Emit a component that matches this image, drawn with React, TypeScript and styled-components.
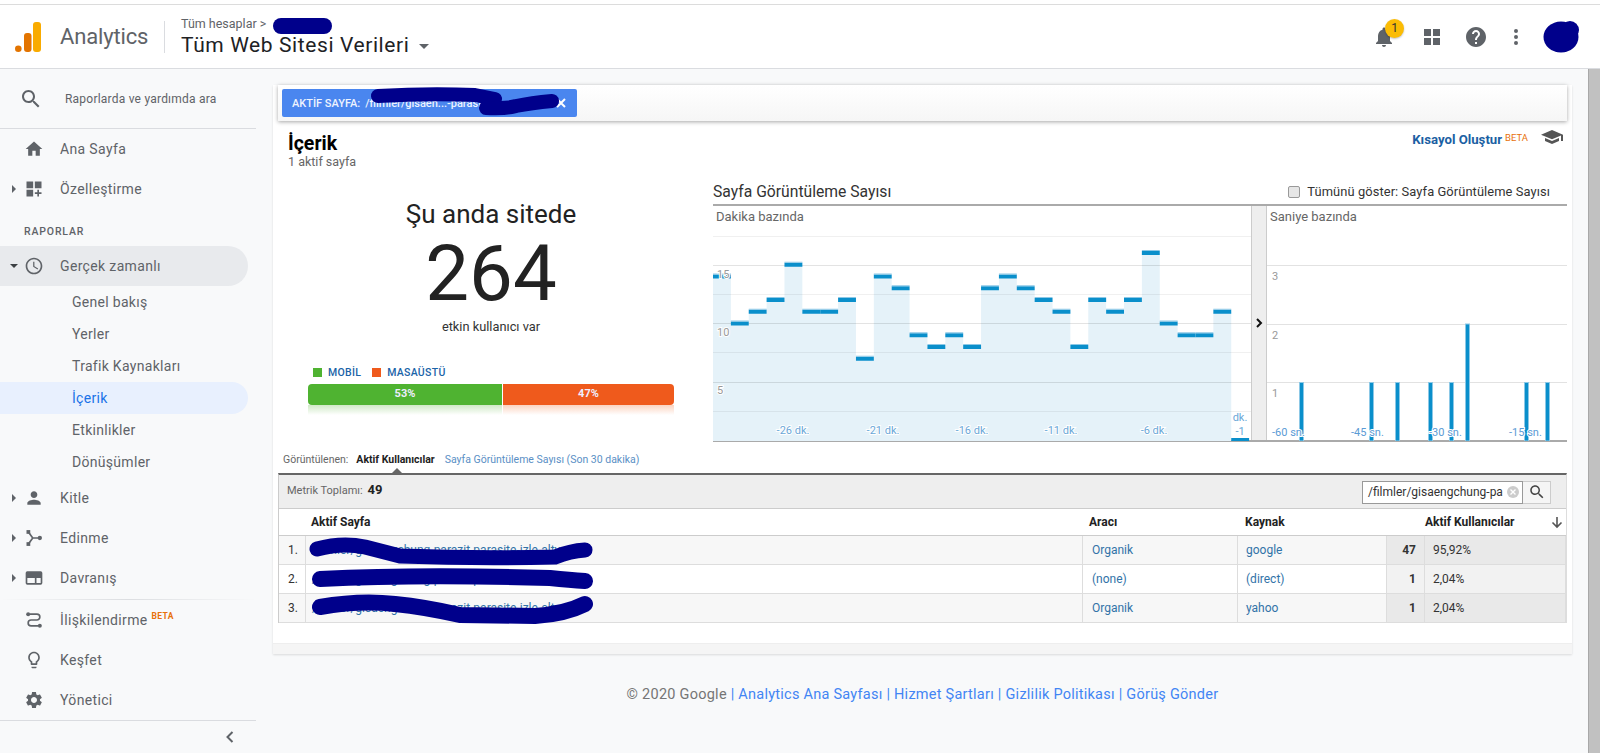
import React from "react";
import styled, { createGlobalStyle } from "styled-components";

const Global = createGlobalStyle`
  html, body { margin: 0; padding: 0; height: 753px; overflow: hidden; background: #f8f9fa; }
  body { font-family: Roboto, "Liberation Sans", sans-serif; color: #222; }
  * { box-sizing: border-box; }
`;

const Page = styled.div`
  position: relative;
  width: 1600px;
  height: 753px;
  display: flex;
  flex-direction: column;
  overflow: hidden;
`;
const TopStrip = styled.div`
  height: 5px;
  background: #fff;
  border-bottom: 1px solid #dcdcdc;
  flex: none;
`;
const Header = styled.header`
  height: 64px;
  flex: none;
  background: #fff;
  border-bottom: 1px solid #dadce0;
  display: flex;
  align-items: center;
  padding-left: 15px;
`;
const Logo = styled.svg`
  width: 26px;
  height: 30px;
  flex: none;
  margin-top: 1px;
`;
const Product = styled.div`
  font-size: 22px;
  color: #5f6368;
  margin-left: 19px;
  width: 104px;
  letter-spacing: -0.15px;
`;
const Divider = styled.div`
  width: 1px;
  height: 32px;
  background: #dadce0;
  margin-right: 16px;
`;
const Crumbs = styled.div`
  display: flex;
  flex-direction: column;
  margin-top: 1px;
`;
const CrumbTop = styled.div`
  font-size: 12.5px;
  color: #5f6368;
  line-height: 16px;
`;
const ViewTitle = styled.div`
  font-size: 21px;
  color: #202124;
  line-height: 27px;
  display: flex;
  align-items: center;
  letter-spacing: 0.6px;
`;
const Caret = styled.span`
  width: 0;
  height: 0;
  margin-left: 9px;
  margin-top: 3px;
  border-left: 5px solid transparent;
  border-right: 5px solid transparent;
  border-top: 5px solid #5f6368;
`;
const HeaderRight = styled.div`
  margin-left: auto;
  display: flex;
  align-items: center;
  padding-right: 24px;
`;
const TopIcon = styled.div<{ $gap: number }>`
  position: relative;
  width: 24px;
  height: 24px;
  margin-right: ${(p) => p.$gap}px;
  color: #5f6368;
`;
const Badge = styled.span`
  position: absolute;
  top: -6px;
  left: 13px;
  width: 19px;
  height: 19px;
  border-radius: 50%;
  background: #fbbc04;
  color: #333;
  font-size: 12px;
  line-height: 19px;
  text-align: center;
  box-shadow: 0 1px 2px rgba(0, 0, 0, 0.25);
`;
const Avatar = styled.div`
  width: 30px;
  height: 30px;
  border-radius: 50%;
  background: #8a6d5f;
`;

const Body = styled.div`
  flex: 1;
  display: flex;
  min-height: 0;
`;
const Sidebar = styled.nav`
  width: 256px;
  flex: none;
  display: flex;
  flex-direction: column;
  background: #f8f9fa;
`;
const SearchRow = styled.div`
  height: 60px;
  flex: none;
  display: flex;
  align-items: center;
  padding-left: 19px;
  border-bottom: 1px solid #dadce0;
  color: #5f6368;
  font-size: 12px;
  letter-spacing: 0.22px;
`;
const SearchLabel = styled.span`
  margin-left: 22px;
`;
const NavRow = styled.div<{ $active?: boolean }>`
  height: 40px;
  flex: none;
  width: 248px;
  display: flex;
  align-items: center;
  padding-left: 10px;
  color: #5f6368;
  font-size: 14px;
  letter-spacing: 0.35px;
  border-radius: 0 20px 20px 0;
  background: ${(p) => (p.$active ? "#e8eaed" : "transparent")};
`;
const CaretSlot = styled.span`
  width: 12px;
  flex: none;
  display: flex;
  align-items: center;
`;
const RightCaret = styled.i`
  width: 0;
  height: 0;
  margin-left: 2px;
  border-top: 4px solid transparent;
  border-bottom: 4px solid transparent;
  border-left: 4px solid #5f6368;
`;
const DownCaret = styled.i`
  width: 0;
  height: 0;
  border-left: 4px solid transparent;
  border-right: 4px solid transparent;
  border-top: 4px solid #3c4043;
`;
const NavIcon = styled.span`
  width: 24px;
  height: 24px;
  flex: none;
  margin-right: 14px;
  color: #5f6368;
  display: flex;
  align-items: center;
  justify-content: center;
`;
const NavBeta = styled.sup`
  font-size: 8.5px;
  font-weight: 700;
  color: #e8710a;
  margin-left: 4px;
  line-height: 0;
  position: relative;
  top: -4px;
  vertical-align: baseline;
`;
const SectionLabel = styled.div`
  height: 37px;
  flex: none;
  padding: 16px 0 0 24px;
  font-size: 10.5px;
  letter-spacing: 0.85px;
  font-weight: 500;
  color: #5f6368;
`;
const SubRow = styled.div<{ $active?: boolean }>`
  height: 32px;
  flex: none;
  width: 248px;
  display: flex;
  align-items: center;
  padding-left: 72px;
  font-size: 14px;
  letter-spacing: 0.3px;
  color: ${(p) => (p.$active ? "#1a73e8" : "#5f6368")};
  background: ${(p) => (p.$active ? "#e8f0fe" : "transparent")};
  border-radius: 0 16px 16px 0;
`;
const NavSep = styled.div<{ $soft?: boolean }>`
  height: 1px;
  flex: none;
  margin: ${(p) => (p.$soft ? "1px 0 0" : "0")};
  background: ${(p) =>
    p.$soft ? "linear-gradient(90deg, #f8f9fa, #dcdee1 50%, #f8f9fa)" : "#dadce0"};
`;
const Collapse = styled.div`
  flex: 1;
  display: flex;
  align-items: center;
  justify-content: flex-end;
  padding-right: 18px;
  color: #5f6368;
`;

const Main = styled.main`
  flex: 1;
  min-width: 0;
  padding: 16px 16px 0 17px;
  display: flex;
  flex-direction: column;
`;
const Card = styled.section`
  width: 1299px;
  height: 569px;
  flex: none;
  background: #fff;
  padding: 0 5px;
  display: flex;
  flex-direction: column;
  box-shadow: 0 1px 2px rgba(0, 0, 0, 0.12);
  position: relative;
`;
const FilterBar = styled.div`
  height: 36px;
  flex: none;
  padding: 4px;
  background: linear-gradient(#fff, #f6f6f6);
  box-shadow: 0 1px 4px rgba(0, 0, 0, 0.35);
`;
const Chip = styled.div`
  width: 295px;
  height: 28px;
  background: #4a86ef;
  border-radius: 2px;
  display: flex;
  align-items: center;
  padding: 0 10px;
  color: #eef3fe;
  font-size: 11px;
  font-weight: 500;
`;
const ChipValue = styled.span`
  margin-left: 5px;
  flex: 1;
  white-space: nowrap;
`;
const TitleRow = styled.div`
  height: 57px;
  flex: none;
  padding: 11px 4px 0 10px;
  display: flex;
  justify-content: space-between;
  align-items: flex-start;
`;
const PageTitle = styled.h1`
  margin: 0;
  font-size: 19.5px;
  line-height: 23px;
  font-weight: 700;
  color: #000;
`;
const PageSub = styled.div`
  font-size: 12.5px;
  line-height: 13px;
  color: #666;
`;
const Shortcut = styled.div`
  display: flex;
  align-items: flex-start;
  font-size: 13.2px;
  font-weight: 700;
  color: #1c5fa3;
`;
const ShortcutBeta = styled.span`
  font-size: 9.5px;
  font-weight: 400;
  color: #e8710a;
  margin: 0 13px 0 3px;
  line-height: 11px;
`;
const CapIcon = styled.svg`
  width: 22px;
  height: 14px;
  margin-top: -2px;
  color: #555;
`;
const Overview = styled.div`
  height: 264px;
  flex: none;
  display: flex;
`;
const LiveCol = styled.div`
  width: 366px;
  margin-left: 30px;
  margin-right: 39px;
  flex: none;
  text-align: center;
  display: flex;
  flex-direction: column;
`;
const LiveLabel = styled.div`
  font-size: 26px;
  line-height: 30px;
  margin-top: 21px;
  color: #222;
`;
const LiveNumber = styled.div`
  font-size: 78px;
  line-height: 86px;
  font-weight: 400;
  margin-top: 2px;
  color: #222;
`;
const LiveCaption = styled.div`
  font-size: 12.8px;
  line-height: 16px;
  margin-top: 2px;
  color: #333;
`;
const Legend = styled.div`
  display: flex;
  align-items: center;
  margin-top: 30px;
  padding-left: 5px;
  height: 14px;
`;
const Swatch = styled.span<{ $color: string }>`
  width: 9px;
  height: 9px;
  background: ${(p) => p.$color};
  margin-right: 6px;
`;
const LegendText = styled.span`
  font-size: 10.5px;
  font-weight: 500;
  color: #1a63a8;
  letter-spacing: 0.3px;
  margin-right: 11px;
`;
const Split = styled.div`
  display: flex;
  margin-top: 5px;
  height: 21px;
  gap: 1px;
  position: relative;
`;
const SplitPart = styled.div<{ $color: string; $side: "l" | "r"; $w: number }>`
  width: ${(p) => p.$w}px;
  flex: none;
  background: ${(p) => p.$color};
  color: #eef;
  font-size: 11px;
  font-weight: 700;
  line-height: 20px;
  border-radius: ${(p) => (p.$side === "l" ? "4px 0 0 4px" : "0 4px 4px 0")};
`;
const Reflect = styled.div`
  display: flex;
  gap: 1px;
  height: 10px;
`;
const ReflectPart = styled.div<{ $color: string; $w: number }>`
  width: ${(p) => p.$w}px;
  background: linear-gradient(${(p) => p.$color}, #fff);
`;
const ChartCol = styled.div`
  width: 854px;
  flex: none;
  display: flex;
  flex-direction: column;
`;
const ChartHead = styled.div`
  height: 28px;
  flex: none;
  display: flex;
  justify-content: space-between;
  align-items: center;
  border-bottom: 2px solid #aaa;
  padding-top: 1px;
  padding-right: 17px;
`;
const ChartTitle = styled.div`
  font-size: 15.7px;
  color: #333;
`;
const CheckLabel = styled.div`
  display: flex;
  align-items: center;
  font-size: 12.9px;
  color: #333;
  letter-spacing: 0.08px;
`;
const CheckBox = styled.span`
  width: 12px;
  height: 12px;
  border: 1px solid #999;
  border-radius: 2px;
  background: #e6e6e6;
  margin-right: 7px;
`;
const ChartRow = styled.div`
  display: flex;
  height: 236px;
  flex: none;
  border-bottom: 2px solid #aaa;
`;
const ChartPane = styled.div<{ $w: number }>`
  position: relative;
  width: ${(p) => p.$w}px;
  flex: none;
`;
const ChartCaption = styled.span`
  position: absolute;
  left: 3px;
  top: 2px;
  padding-right: 3px;
  background: #fff;
  font-size: 13px;
  line-height: 18px;
  color: #666;
`;
const ChartSvg = styled.svg`
  display: block;
`;
const Handle = styled.div`
  width: 16px;
  flex: none;
  background: #eee;
  border-left: 1px solid #ccc;
  border-right: 1px solid #ccc;
  display: flex;
  align-items: center;
  justify-content: center;
  color: #111;
`;
const Tabs = styled.div`
  height: 31px;
  flex: none;
  position: relative;
  display: flex;
  align-items: center;
  padding: 4px 0 0 5px;
  font-size: 10.5px;
`;
const TabLabel = styled.span`
  color: #666;
  margin-right: 8px;
`;
const TabOn = styled.span`
  color: #222;
  font-weight: 700;
  margin-right: 10px;
`;
const TabLink = styled.span`
  color: #5a8fc5;
`;
const TabArrow = styled.i`
  position: absolute;
  left: 114px;
  bottom: 0;
  width: 0;
  height: 0;
  border-left: 5px solid transparent;
  border-right: 5px solid transparent;
  border-bottom: 5px solid #666;
`;
const Table = styled.div`
  flex: none;
  border-top: 2px solid #666;
  border-left: 1px solid #ccc;
  border-right: 1px solid #ddd;
`;
const MetricBar = styled.div`
  height: 34px;
  background: #eee;
  border-bottom: 1px solid #ccc;
  display: flex;
  align-items: center;
  justify-content: space-between;
  padding: 0 15px 0 8px;
`;
const MetricLabel = styled.span`
  font-size: 11px;
  color: #666;
  margin-top: -5px;
  b {
    font-size: 13px;
    color: #222;
    margin-left: 2px;
  }
`;
const SearchBox = styled.div`
  display: flex;
  height: 23px;
  margin-top: 1px;
`;
const SearchInput = styled.div`
  width: 161px;
  background: #fff;
  border: 1px solid #999;
  display: flex;
  align-items: center;
  justify-content: space-between;
  padding: 0 3px 0 5px;
  font-size: 12px;
  color: #333;
`;
const ClearDot = styled.svg`
  width: 12px;
  height: 12px;
  flex: none;
`;
const SearchBtn = styled.div`
  width: 28px;
  background: #f5f5f5;
  border: 1px solid #ccc;
  border-left: none;
  display: flex;
  align-items: center;
  justify-content: center;
  color: #444;
`;
const Grid = styled.div`
  display: grid;
  grid-template-columns: 27px 777px 155px 149px 38px 1fr;
`;
const HeadCell = styled.div<{ $span?: number; $pl: number }>`
  grid-column: span ${(p) => p.$span ?? 1};
  height: 27px;
  border-bottom: 1px solid #ccc;
  font-size: 12px;
  font-weight: 700;
  color: #222;
  display: flex;
  align-items: center;
  justify-content: space-between;
  padding-left: ${(p) => p.$pl}px;
  padding-right: 2px;
`;
const Cell = styled.div<{ $odd: boolean; $tone?: boolean; $right?: boolean; $pl?: number; $link?: boolean; $bold?: boolean }>`
  height: 29px;
  display: flex;
  align-items: center;
  white-space: nowrap;
  overflow: hidden;
  justify-content: ${(p) => (p.$right ? "flex-end" : "flex-start")};
  padding: 0 8px 0 ${(p) => p.$pl ?? 6}px;
  font-size: 12px;
  font-weight: ${(p) => (p.$bold ? 700 : 400)};
  color: ${(p) => (p.$link ? "#3273a8" : "#333")};
  border-bottom: 1px solid #ddd;
  border-right: 1px solid #ddd;
  background: ${(p) =>
    p.$tone ? (p.$odd ? "#e9e9e9" : "#f2f2f2") : p.$odd ? "#f7f7f7" : "#fff"};
`;
const CardFoot = styled.div`
  position: absolute;
  left: 0;
  right: 0;
  bottom: 0;
  height: 11px;
  background: #f5f5f5;
  border-top: 1px solid #eee;
`;
const Footer = styled.footer`
  margin-top: 32px;
  text-align: center;
  font-size: 14.5px;
  letter-spacing: 0.25px;
  color: #757575;
`;
const FootLink = styled.span`
  color: #4285f4;
`;
const Scrollbar = styled.div`
  width: 12px;
  flex: none;
  background: #c1c1c1;
  border-left: 1px solid #a8a8a8;
`;
const Scribbles = styled.svg`
  position: absolute;
  left: 0;
  top: 0;
  pointer-events: none;
  filter: blur(0.6px);
`;

const Icon = ({ d, size = 20, evenodd }: { d: string; size?: number; evenodd?: boolean }) => (
  <svg width={size} height={size} viewBox="0 0 24 24" fill="currentColor">
    <path d={d} fillRule={evenodd ? "evenodd" : "nonzero"} />
  </svg>
);

const P = {
  home: "M10 20v-6h4v6h5v-8h3L12 3 2 12h3v8z",
  custom: "M3 3h8v8H3zm10 0h8v8h-8zM3 13h8v8H3zm15 0h-2v3h-3v2h3v3h2v-3h3v-2h-3z",
  clock:
    "M11.99 2C6.47 2 2 6.48 2 12s4.47 10 9.99 10C17.52 22 22 17.52 22 12S17.52 2 11.99 2zM12 20c-4.42 0-8-3.58-8-8s3.58-8 8-8 8 3.58 8 8-3.58 8-8 8zM12.5 7H11v6l5.25 3.15.75-1.23-4.5-2.67z",
  person:
    "M12 12c2.21 0 4-1.79 4-4s-1.79-4-4-4-4 1.79-4 4 1.79 4 4 4zm0 2c-2.67 0-8 1.34-8 4v2h16v-2c0-2.66-5.33-4-8-4z",
  window:
    "M20 4H4a2 2 0 0 0-2 2v12a2 2 0 0 0 2 2h16a2 2 0 0 0 2-2V6a2 2 0 0 0-2-2zM4 18v-6h9v6zm11 0v-6h5v6z",
  bulb:
    "M9 21c0 .55.45 1 1 1h4c.55 0 1-.45 1-1v-1H9v1zm3-19C8.14 2 5 5.14 5 9c0 2.38 1.19 4.47 3 5.74V17c0 .55.45 1 1 1h6c.55 0 1-.45 1-1v-2.26c1.81-1.27 3-3.36 3-5.74 0-3.86-3.14-7-7-7zm2.85 11.1l-.85.6V16h-4v-2.3l-.85-.6C7.8 12.16 7 10.63 7 9c0-2.76 2.24-5 5-5s5 2.24 5 5c0 1.63-.8 3.16-2.15 4.1z",
  gear:
    "M19.14 12.94c.04-.3.06-.61.06-.94 0-.32-.02-.64-.07-.94l2.03-1.58c.18-.14.23-.41.12-.61l-1.92-3.32c-.12-.22-.37-.29-.59-.22l-2.39.96c-.5-.38-1.03-.7-1.62-.94l-.36-2.54c-.04-.24-.24-.41-.48-.41h-3.84c-.24 0-.43.17-.47.41l-.36 2.54c-.59.24-1.13.57-1.62.94l-2.39-.96c-.22-.08-.47 0-.59.22L2.74 8.87c-.12.21-.08.47.12.61l2.03 1.58c-.05.3-.09.63-.09.94s.02.64.07.94l-2.03 1.58c-.18.14-.23.41-.12.61l1.92 3.32c.12.22.37.29.59.22l2.39-.96c.5.38 1.03.7 1.62.94l.36 2.54c.05.24.24.41.48.41h3.84c.24 0 .44-.17.47-.41l.36-2.54c.59-.24 1.13-.56 1.62-.94l2.39.96c.22.08.47 0 .59-.22l1.92-3.32c.12-.22.07-.47-.12-.61l-2.01-1.58zM12 15.6c-1.98 0-3.6-1.62-3.6-3.6s1.62-3.6 3.6-3.6 3.6 1.62 3.6 3.6-1.62 3.6-3.6 3.6z",
  search:
    "M15.5 14h-.79l-.28-.27C15.41 12.59 16 11.11 16 9.5 16 5.91 13.09 3 9.5 3S3 5.91 3 9.5 5.91 16 9.5 16c1.61 0 3.09-.59 4.23-1.57l.27.28v.79l5 4.99L20.49 19l-4.99-5zm-6 0C7.01 14 5 11.99 5 9.5S7.01 5 9.5 5 14 7.01 14 9.5 11.99 14 9.5 14z",
  bell:
    "M12 22c1.1 0 2-.9 2-2h-4c0 1.1.89 2 2 2zm6-6v-5c0-3.07-1.64-5.64-4.5-6.32V4c0-.83-.67-1.5-1.5-1.5s-1.5.67-1.5 1.5v.68C7.63 5.36 6 7.92 6 11v5l-2 2v1h16v-1l-2-2z",
  help:
    "M12 2C6.48 2 2 6.48 2 12s4.48 10 10 10 10-4.48 10-10S17.52 2 12 2zm1 17h-2v-2h2v2zm2.07-7.75l-.9.92C13.45 12.9 13 13.5 13 15h-2v-.5c0-1.1.45-2.1 1.17-2.83l1.24-1.26c.37-.36.59-.86.59-1.41 0-1.1-.9-2-2-2s-2 .9-2 2H8c0-2.21 1.79-4 4-4s4 1.79 4 4c0 .88-.36 1.68-.93 2.25z",
  apps: "M4 4h7v7H4zm9 0h7v7h-7zM4 13h7v7H4zm9 0h7v7h-7z",
  dots: "M12 8a2 2 0 1 0 0-4 2 2 0 0 0 0 4zm0 2a2 2 0 1 0 0 4 2 2 0 0 0 0-4zm0 6a2 2 0 1 0 0 4 2 2 0 0 0 0-4z",
  cap: "M5 13.18v4L12 21l7-3.82v-4L12 17l-7-3.82zM12 3L1 9l11 6 9-4.91V17h2V9L12 3z",
};

const Acquisition = () => (
  <svg width="20" height="20" viewBox="0 0 24 24" fill="currentColor">
    <rect x="3" y="2.5" width="4.5" height="4.5" />
    <rect x="3" y="17" width="4.5" height="4.5" />
    <circle cx="19" cy="12" r="2.6" />
    <path d="M5.5 5l5 7-5 7M10.5 12H18" fill="none" stroke="currentColor" strokeWidth="2" />
  </svg>
);
const Attribution = () => (
  <svg width="20" height="20" viewBox="0 0 24 24" fill="currentColor">
    <circle cx="5" cy="5" r="2.4" />
    <circle cx="19" cy="19" r="2.4" />
    <path
      d="M7 5h8.5a3.5 3.5 0 0 1 0 7h-7a3.5 3.5 0 0 0 0 7H17"
      fill="none"
      stroke="currentColor"
      strokeWidth="2"
    />
  </svg>
);

const minuteValues = [14, 10, 11, 12, 15, 11, 11, 12, 7, 14, 13, 9, 8, 9, 8, 13, 14, 13, 12, 11, 8, 12, 11, 12, 16, 10, 9, 9, 11, 0];
const COL = 17.87;
const H = 235;
const yOf = (v: number) => H - v * 11.75;

const Halo = styled.text<{ $c: string }>`
  font-family: Roboto, "Liberation Sans", sans-serif;
  font-size: 11px;
  fill: ${(p) => p.$c};
  stroke: #fff;
  stroke-width: 2px;
  paint-order: stroke;
`;

const MinuteChart = () => {
  let area = `M0 ${H}`;
  minuteValues.forEach((v, i) => {
    if (v > 0) area += `L${i * COL} ${yOf(v)}L${(i + 1) * COL} ${yOf(v)}`;
    else area += `L${i * COL} ${H}`;
  });
  area += "Z";
  return (
    <ChartSvg width="538" height="235">
      <path d={area} fill="#e5f2f9" />
      {[30, 59, 88, 117, 146, 176, 205].map((y, i) => (
        <line key={y} x1="0" x2="538" y1={y + 0.5} y2={y + 0.5} stroke={i % 2 ? "rgba(0,0,0,.11)" : "rgba(0,0,0,.06)"} />
      ))}
      {minuteValues.map((v, i) => (
        <g key={i}>
          <rect x={i * COL} y={v > 0 ? yOf(v) - 2 : H - 3} width={COL} height={v > 0 ? 4 : 3} fill="#0a8fcb" />
          {v > 0 && <rect x={i * COL} y={yOf(v) - 3} width={COL} height={1} fill="#8cc8e6" />}
        </g>
      ))}
      <Halo $c="#999" x="4" y="72">15</Halo>
      <Halo $c="#999" x="4" y="130">10</Halo>
      <Halo $c="#999" x="4" y="188">5</Halo>
      {[["-26 dk.", 80], ["-21 dk.", 170], ["-16 dk.", 259], ["-11 dk.", 348], ["-6 dk.", 441]].map(([t, x]) => (
        <Halo key={t as string} $c="#6aa7d8" x={x as number} y="228" textAnchor="middle">{t}</Halo>
      ))}
      <Halo $c="#6aa7d8" x="527" y="215" textAnchor="middle">dk.</Halo>
      <Halo $c="#6aa7d8" x="527" y="229" textAnchor="middle">-1</Halo>
    </ChartSvg>
  );
};

const secondBars: [number, number][] = [[32, 1], [102, 1], [128, 1], [161, 1], [182, 1], [198, 2], [257, 1], [278, 1]];
const SecondChart = () => (
  <ChartSvg width="300" height="235">
    {[59, 118, 176].map((y) => (
      <line key={y} x1="0" x2="300" y1={y + 0.5} y2={y + 0.5} stroke="#e2e2e2" />
    ))}
    {secondBars.map(([x, v]) => (
      <rect key={x} x={x + 0.5} y={H - v * 58.5} width="4" height={v * 58.5} fill="#0a8fcb" stroke="#8cc8e6" strokeWidth="1" />
    ))}
    <Halo $c="#999" x="5" y="74">3</Halo>
    <Halo $c="#999" x="5" y="133">2</Halo>
    <Halo $c="#999" x="5" y="191">1</Halo>
    {[["-60 sn.", 5], ["-45 sn.", 84], ["-30 sn.", 162], ["-15 sn.", 242]].map(([t, x]) => (
      <Halo key={t as string} $c="#5b9bd5" x={x as number} y="230">{t}</Halo>
    ))}
  </ChartSvg>
);

const rows = [
  ["/filmler/gisaengchung-parazit-parasite-izle-altyazili/", "Organik", "google", "47", "95,92%"],
  ["/filmler/gisaengchung-parazit-parasite-izle-altyazili/", "(none)", "(direct)", "1", "2,04%"],
  ["/filmler/gisaengchung-parazit-parasite-izle-altyazili/", "Organik", "yahoo", "1", "2,04%"],
];

const Ink = styled.path<{ $w: number }>`
  fill: none;
  stroke: #00008b;
  stroke-width: ${(p) => p.$w}px;
  stroke-linecap: round;
  stroke-linejoin: round;
`;

export default function App() {
  return (
    <Page>
      <Global />
      <TopStrip />
      <Header>
        <Logo viewBox="0 0 26 30">
          <rect x="18" y="0" width="8" height="30" rx="3" fill="#f9ab00" />
          <rect x="9" y="11" width="7.5" height="19" rx="3" fill="#e37400" />
          <circle cx="3.3" cy="26.7" r="3.3" fill="#e37400" />
        </Logo>
        <Product>Analytics</Product>
        <Divider />
        <Crumbs>
          <CrumbTop>Tüm hesaplar &gt;</CrumbTop>
          <ViewTitle>
            Tüm Web Sitesi Verileri
            <Caret />
          </ViewTitle>
        </Crumbs>
        <HeaderRight>
          <TopIcon $gap={24}>
            <Icon d={P.bell} size={24} />
            <Badge>1</Badge>
          </TopIcon>
          <TopIcon $gap={20}>
            <Icon d={P.apps} size={24} />
          </TopIcon>
          <TopIcon $gap={16}>
            <Icon d={P.help} size={24} />
          </TopIcon>
          <TopIcon $gap={18}>
            <Icon d={P.dots} size={24} />
          </TopIcon>
          <Avatar />
        </HeaderRight>
      </Header>
      <Body>
        <Sidebar>
          <SearchRow>
            <Icon d={P.search} size={24} />
            <SearchLabel>Raporlarda ve yardımda ara</SearchLabel>
          </SearchRow>
          <NavRow>
            <CaretSlot />
            <NavIcon><Icon d={P.home} /></NavIcon>
            Ana Sayfa
          </NavRow>
          <NavRow>
            <CaretSlot><RightCaret /></CaretSlot>
            <NavIcon><Icon d={P.custom} /></NavIcon>
            Özelleştirme
          </NavRow>
          <SectionLabel>RAPORLAR</SectionLabel>
          <NavRow $active>
            <CaretSlot><DownCaret /></CaretSlot>
            <NavIcon><Icon d={P.clock} /></NavIcon>
            Gerçek zamanlı
          </NavRow>
          <SubRow>Genel bakış</SubRow>
          <SubRow>Yerler</SubRow>
          <SubRow>Trafik Kaynakları</SubRow>
          <SubRow $active>İçerik</SubRow>
          <SubRow>Etkinlikler</SubRow>
          <SubRow>Dönüşümler</SubRow>
          <NavRow>
            <CaretSlot><RightCaret /></CaretSlot>
            <NavIcon><Icon d={P.person} /></NavIcon>
            Kitle
          </NavRow>
          <NavRow>
            <CaretSlot><RightCaret /></CaretSlot>
            <NavIcon><Acquisition /></NavIcon>
            Edinme
          </NavRow>
          <NavRow>
            <CaretSlot><RightCaret /></CaretSlot>
            <NavIcon><Icon d={P.window} evenodd /></NavIcon>
            Davranış
          </NavRow>
          <NavSep $soft />
          <NavRow>
            <CaretSlot />
            <NavIcon><Attribution /></NavIcon>
            İlişkilendirme<NavBeta>BETA</NavBeta>
          </NavRow>
          <NavRow>
            <CaretSlot />
            <NavIcon><Icon d={P.bulb} /></NavIcon>
            Keşfet
          </NavRow>
          <NavRow>
            <CaretSlot />
            <NavIcon><Icon d={P.gear} /></NavIcon>
            Yönetici
          </NavRow>
          <NavSep />
          <Collapse>
            <svg width="16" height="16" viewBox="0 0 16 16" fill="none" stroke="currentColor" strokeWidth="2">
              <path d="M10.5 3l-5 5 5 5" />
            </svg>
          </Collapse>
        </Sidebar>
        <Main>
          <Card>
            <FilterBar>
              <Chip>
                AKTİF SAYFA:
                <ChipValue>/filmler/gisaen...-parasite</ChipValue>
                <svg width="12" height="12" viewBox="0 0 12 12" stroke="#fff" strokeWidth="2" fill="none">
                  <path d="M2 2l8 8M10 2l-8 8" />
                </svg>
              </Chip>
            </FilterBar>
            <TitleRow>
              <div>
                <PageTitle>İçerik</PageTitle>
                <PageSub>1 aktif sayfa</PageSub>
              </div>
              <Shortcut>
                Kısayol Oluştur
                <ShortcutBeta>BETA</ShortcutBeta>
                <CapIcon viewBox="1 3 22 18" preserveAspectRatio="none" fill="currentColor">
                  <path d={P.cap} />
                </CapIcon>
              </Shortcut>
            </TitleRow>
            <Overview>
              <LiveCol>
                <LiveLabel>Şu anda sitede</LiveLabel>
                <LiveNumber>264</LiveNumber>
                <LiveCaption>etkin kullanıcı var</LiveCaption>
                <Legend>
                  <Swatch $color="#4fb331" />
                  <LegendText>MOBİL</LegendText>
                  <Swatch $color="#ef5a1c" />
                  <LegendText>MASAÜSTÜ</LegendText>
                </Legend>
                <Split>
                  <SplitPart $color="#4fb331" $side="l" $w={194}>53%</SplitPart>
                  <SplitPart $color="#ef5a1c" $side="r" $w={171}>47%</SplitPart>
                </Split>
                <Reflect>
                  <ReflectPart $color="#cfe9c6" $w={194} />
                  <ReflectPart $color="#fbd3c0" $w={171} />
                </Reflect>
              </LiveCol>
              <ChartCol>
                <ChartHead>
                  <ChartTitle>Sayfa Görüntüleme Sayısı</ChartTitle>
                  <CheckLabel>
                    <CheckBox />
                    Tümünü göster: Sayfa Görüntüleme Sayısı
                  </CheckLabel>
                </ChartHead>
                <ChartRow>
                  <ChartPane $w={538}>
                    <MinuteChart />
                    <ChartCaption>Dakika bazında</ChartCaption>
                  </ChartPane>
                  <Handle>
                    <svg width="8" height="10" viewBox="0 0 8 10" fill="none" stroke="currentColor" strokeWidth="2">
                      <path d="M2 1l4 4-4 4" />
                    </svg>
                  </Handle>
                  <ChartPane $w={300}>
                    <SecondChart />
                    <ChartCaption>Saniye bazında</ChartCaption>
                  </ChartPane>
                </ChartRow>
              </ChartCol>
            </Overview>
            <Tabs>
              <TabLabel>Görüntülenen:</TabLabel>
              <TabOn>Aktif Kullanıcılar</TabOn>
              <TabLink>Sayfa Görüntüleme Sayısı (Son 30 dakika)</TabLink>
              <TabArrow />
            </Tabs>
            <Table>
              <MetricBar>
                <MetricLabel>Metrik Toplamı: <b>49</b></MetricLabel>
                <SearchBox>
                  <SearchInput>
                    /filmler/gisaengchung-pa
                    <ClearDot viewBox="0 0 12 12">
                      <circle cx="6" cy="6" r="6" fill="#ccc" />
                      <path d="M3.5 3.5l5 5M8.5 3.5l-5 5" stroke="#fff" strokeWidth="1.4" />
                    </ClearDot>
                  </SearchInput>
                  <SearchBtn><Icon d={P.search} size={18} /></SearchBtn>
                </SearchBox>
              </MetricBar>
              <Grid>
                <HeadCell $span={2} $pl={32}>Aktif Sayfa</HeadCell>
                <HeadCell $pl={6}>Aracı</HeadCell>
                <HeadCell $pl={7}>Kaynak</HeadCell>
                <HeadCell $span={2} $pl={38}>
                  Aktif Kullanıcılar
                  <svg width="14" height="14" viewBox="0 0 14 14" fill="none" stroke="#555" strokeWidth="1.6">
                    <path d="M7 2v10M2.5 7.5L7 12l4.5-4.5" />
                  </svg>
                </HeadCell>
                {rows.map((r, i) => {
                  const odd = i % 2 === 0;
                  return (
                    <React.Fragment key={i}>
                      <Cell $odd={odd} $pl={9}>{i + 1}.</Cell>
                      <Cell $odd={odd} $link>{r[0]}</Cell>
                      <Cell $odd={odd} $link $pl={9}>{r[1]}</Cell>
                      <Cell $odd={odd} $link $pl={8}>{r[2]}</Cell>
                      <Cell $odd={odd} $tone $right $bold>{r[3]}</Cell>
                      <Cell $odd={odd} $tone $pl={8}>{r[4]}</Cell>
                    </React.Fragment>
                  );
                })}
              </Grid>
            </Table>
            <CardFoot />
          </Card>
          <Footer>
            © 2020 Google <FootLink>| Analytics Ana Sayfası | Hizmet Şartları | Gizlilik Politikası | Görüş Gönder</FootLink>
          </Footer>
        </Main>
        <Scrollbar />
      </Body>
      <Scribbles width="1600" height="753" viewBox="0 0 1600 753">
        <Ink $w={16} d="M281 26h43" />
        <Ink $w={14} d="M378 96q50-3 97-1l20 4" />
        <Ink $w={14} d="M486 108q20 1 30-2 15-3 36-5" />
        <Ink $w={15} d="M317 549q25-7 48-2l35 9q80 3 155 1 15-6 30-7" />
        <Ink $w={16} d="M320 579q100-5 230-1 20 2 35 3" />
        <Ink $w={16} d="M320 607q40-7 75-3 30 3 65 11l75 1q30-2 50-12" />
        <ellipse cx="1561" cy="37" rx="17.5" ry="15.5" fill="#00008b" />
        <circle cx="1570" cy="30" r="9" fill="#00008b" />
      </Scribbles>
    </Page>
  );
}
